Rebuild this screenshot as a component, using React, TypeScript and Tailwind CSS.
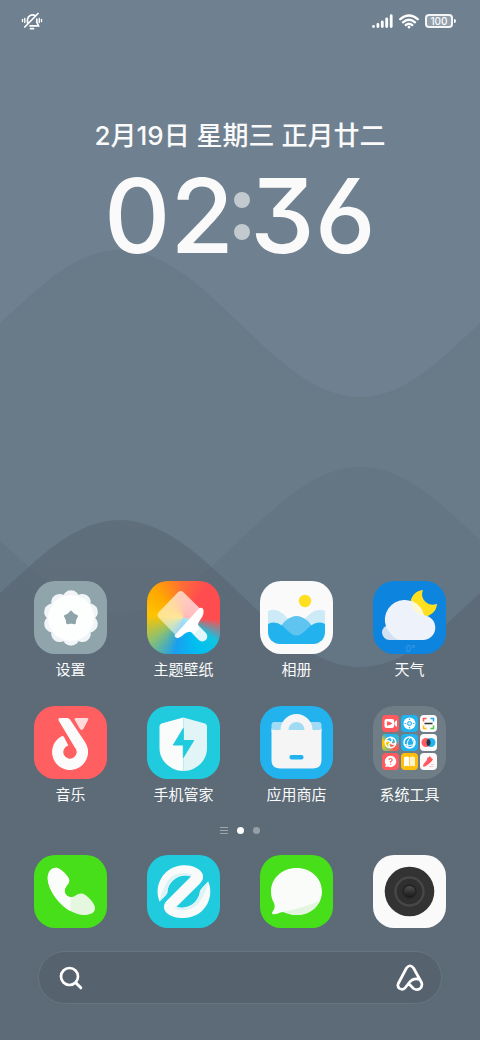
import type { ReactNode } from "react";

type AppItem = { id: string; label: string; tile: string; art: ReactNode };

// ─── Icon artwork (all on a 73×73 grid) ──────────────────────────────────────

function Art({ children }: { children: ReactNode }) {
  return (
    <svg viewBox="0 0 73 73" className="size-full" aria-hidden>
      {children}
    </svg>
  );
}

const PETALS = [0, 36, 72, 108, 144, 180, 216, 252, 288, 324];

const settingsArt = (
  <Art>
    <g fill="#f1f5f7">
      {PETALS.map((a) => (
        <circle key={a} cx="37" cy="17.6" r="8.4" transform={`rotate(${a} 37 37)`} />
      ))}
    </g>
    <circle cx="37" cy="37" r="23" fill="#fdfefe" />
    <path
      d="M37 31 L39.4 33.7 L42.7 35.2 L41 38.3 L40.5 42 L37 41.3 L33.5 42 L33 38.3 L31.3 35.2 L34.6 33.7Z"
      fill="#8fa4ab"
      stroke="#8fa4ab"
      strokeWidth="2.6"
      strokeLinejoin="round"
    />
  </Art>
);

const themeArt = (
  <Art>
    <defs>
      <linearGradient id="bristle" x1="0" y1="1" x2="1" y2="0">
        <stop offset="0" stopColor="#fff" stopOpacity="0.5" />
        <stop offset="1" stopColor="#fff" stopOpacity="0.72" />
      </linearGradient>
    </defs>
    <path d="M31 11.2 Q33.7 8.8 36.4 11.2 L53.5 28 L29 54.5 L11.5 36.5 Q9.5 34 11.7 31.3Z" fill="url(#bristle)" />
    <path d="M46 46 L55.3 55.5" stroke="#e3f6fa" strokeWidth="10" strokeLinecap="round" />
    <path
      d="M51.5 28 C54 25.5 57.2 27 56.5 31.5 C56 37 51.5 39.500 51 43.5 Q51 46 52.5 47.5 L47.5 52.5 C44 49.5 40 50.5 36.5 53.5 C33 57 28.5 58.5 27.5 54.5Z"
      fill="#fff"
    />
  </Art>
);

const galleryArt = (
  <Art>
    <defs>
      <clipPath id="frame">
        <path d="M8 20 H65 V51 A12 12 0 0 1 53 63 H20 A12 12 0 0 1 8 51Z" />
      </clipPath>
    </defs>
    <circle cx="45" cy="20" r="6.2" fill="#ffdf1f" />
    <g clipPath="url(#frame)">
      <path d="M8 30 Q15 26.5 22 32 C28 37 31 42 36.5 42 C42 42 45 37 51 32 Q58 26.5 65 30 V60 H8Z" fill="#cdebf6" />
      <path d="M8 60 C20 50 20 44 26 39.5 C33 33.5 40 33.5 47 39.5 C53 44 53 50 65 60Z" fill="#5fc4f0" />
      <path d="M8 43 Q15 39.5 22 44.5 C28 49 31 54.5 36.5 54.5 C42 54.5 45 49 51 44.5 Q58 39.5 65 43 V64 H8Z" fill="#22b2ee" />
    </g>
  </Art>
);

const weatherArt = (
  <Art>
    <path d="M50 9 A13.2 13.2 0 1 0 64 22.7 A10.5 10.5 0 0 1 50 9Z" fill="#ffe01e" />
    <circle cx="16.5" cy="51.5" r="7.5" fill="#cfe1f3" />
    <path d="M16 59 L26 45 L40 59Z" fill="#cfe1f3" />
    <path d="M18 53 A19.8 19.8 0 1 1 51 34.3 A12.4 12.4 0 0 1 51 59 H28 Q21.5 58.5 18 53Z" fill="#eef3fb" />
    <path d="M38.5 20 A19.8 19.8 0 0 1 51 34.3 A13.2 13.2 0 0 1 38.5 20Z" fill="#fdf8d0" />
    <text x="37.5" y="71" textAnchor="middle" fontSize="9" fill="#3f9be6" fontFamily="Inter, sans-serif">
      0°
    </text>
  </Art>
);

const musicArt = (
  <Art>
    <path
      d="M26.5 12 H33 Q35 12 36 13.5 L51 36 A18 18 0 1 1 27.5 30.2 Q29 29.5 30 31 L34.3 39.5 A6.7 6.7 0 1 0 40.5 41 L24.8 14.8 Q23.5 12 26.5 12Z"
      fill="#fbfbfb"
    />
    <path d="M42 12 H53 Q55 12 54 14 L49.5 22.8 Q47.5 25 45.8 22.8 L40.8 14 Q40 12 42 12Z" fill="#ffdadb" />
  </Art>
);

const shieldArt = (
  <Art>
    <path d="M36.3 11.5 L14.5 17.5 Q12.5 18.3 12.5 20.5 V42 C12.5 56 25 65 36.3 65Z" fill="#fafbfb" />
    <path d="M36.3 11.5 L58 17.5 Q60 18.3 60 20.5 V42 C60 56 48 65 36.3 65Z" fill="#e1f4f6" />
    <path d="M36.3 22.5 L26.3 39 H36.3 V51.5 L46.7 34.5 H36.3Z" fill="#21cbde" stroke="#21cbde" strokeLinejoin="round" />
  </Art>
);

const storeArt = (
  <Art>
    <path d="M11.5 26 V19 Q11.5 16 14.5 16 H58.5 Q61.5 16 61.5 19 V26Z" fill="#a0daf5" />
    <path
      d="M11.5 22 Q11.5 24 14 24 H20.5 A16 16 0 0 1 52.5 24 H59 Q61.5 24 61.5 22 V54 Q61.5 62.5 53 62.5 H20 Q11.5 62.5 11.5 54Z"
      fill="#f5f5f6"
    />
    <path d="M28.5 24 A8 8 0 0 1 44.5 24Z" fill="#a0daf5" />
    <rect x="29.5" y="49" width="14" height="4.5" rx="2" fill="#22b2ee" />
  </Art>
);

const phoneArt = (
  <Art>
    <path
      d="M22 12.7 C26 12.7 33 19.5 35 24 C36.5 29 30.5 31 30.7 36 C31 40 34 42.5 38 42 C42 41.5 43 38 48 38.5 C52 39 61 48 61 53 C61 58 56 60 50 60 C33 60 13.7 38 13.7 23 C13.7 17 17 12.7 22 12.7Z"
      fill="#e5f8df"
    />
    <path
      d="M22 12.7 C26 12.7 33 19.5 35 24 C36.5 29 30.5 31 30.7 36 C31 39.5 33.5 41.8 36.5 42 V56.2 C24 49 13.7 34 13.7 23 C13.7 17 17 12.7 22 12.7Z"
      fill="#fbfdfb"
    />
  </Art>
);

const browserArt = (
  <Art>
    <path
      d="M12.5 46.5 A26.3 26.3 0 0 1 36.3 10.3 C42 10 48 11.5 52 14.5 C57 18.5 57.5 23.5 53 28.5 L29.5 51.8 C35 54 43 52 48 47 C51 43.5 52.5 40 53 36 C54.5 33 58 30 61.2 26.5 A26.3 26.3 0 0 1 36.3 63 C30 63.3 25 62 21 59 C16 55 15.5 50 20 45.5 L44 21.5 C39 19.5 31 20.5 25.5 26 C22 29.5 20.5 33 20.3 38 C18.5 41 15.5 43.5 12.5 46.5Z"
      fill="#f9fbfb"
    />
    <path d="M20.3 38 C20.5 26 31 16.5 44 21.5 L46 20 C36 16 24 18 19 29 Q14 37 12.5 46.5 C15.5 43.5 18.5 41 20.3 38Z" fill="#def3f6" />
    <path d="M53 36 C52.5 48 41 56 29.5 51.8 L27.5 53.5 C37 58 50 54 55 43 Q60 36 61.2 26.5 C58 30 54.5 33 53 36Z" fill="#def3f6" />
  </Art>
);

const messageArt = (
  <Art>
    <defs>
      <clipPath id="bubble">
        <path d="M36.7 13 C51 13 62 23.5 62 36.5 C62 49.5 51 60 36.7 60 C31 60 27 58.5 23.5 57 C20 57 17 59.5 13.5 59.3 C11.5 59 12 57.5 13 56 C15 53 15 51 14 48 C12 45 11 41 11 36.5 C11 23.5 22 13 36.7 13Z" />
      </clipPath>
    </defs>
    <g clipPath="url(#bubble)">
      <rect width="73" height="73" fill="#fafcfa" />
      <path d="M22 57 Q44 53 62 45 V64 H20Z" fill="#e3f5de" />
    </g>
  </Art>
);

const cameraArt = (
  <Art>
    <defs>
      <linearGradient id="lens" x1="0" y1="0" x2="0" y2="1">
        <stop offset="0" stopColor="#505050" />
        <stop offset="1" stopColor="#191919" />
      </linearGradient>
    </defs>
    <circle cx="36.5" cy="36.5" r="24.8" fill="#333" />
    <circle cx="36.5" cy="36.5" r="14" fill="#2f2f2f" stroke="#474747" strokeWidth="2.4" />
    <circle cx="36.5" cy="36.5" r="7.2" fill="#232323" />
    <circle cx="36.5" cy="36.5" r="5.5" fill="url(#lens)" />
  </Art>
);

// ─── Folder contents (17×17 grid each) ───────────────────────────────────────

const FOLDER: { id: string; tile: string; art: ReactNode }[] = [
  {
    id: "recorder",
    tile: "bg-[#ff5a5f]",
    art: (
      <>
        <rect x="2.5" y="4" width="9.5" height="9" rx="2" fill="#fff" />
        <path d="M12.5 7 L15 5 V12 L12.5 10Z" fill="#fff" />
        <path d="M5 6.2 Q9 7 10.5 8.5 Q9 10 5 10.8Z" fill="#ff5a5f" />
      </>
    ),
  },
  {
    id: "remote",
    tile: "bg-[#22b2ee]",
    art: (
      <>
        <circle cx="8.5" cy="8.5" r="6" fill="#fff" />
        <circle cx="8.5" cy="8.5" r="2" fill="#bfe8fa" stroke="#22b2ee" />
        <path d="M8.5 3.5v1.5M8.5 12v1.5M3.5 8.5h1.5M12 8.5h1.5" stroke="#22b2ee" strokeWidth="1.2" />
      </>
    ),
  },
  {
    id: "scanner",
    tile: "bg-[#fafafa]",
    art: (
      <g fill="none" strokeWidth="1.5">
        <path d="M3.5 6.5 V3.5 H6.5" stroke="#ff5a5f" />
        <path d="M10.5 3.5 H13.5 V6.5" stroke="#22a7ee" />
        <path d="M13.5 10.5 V13.5 H10.5" stroke="#4cc94a" />
        <path d="M6.5 13.5 H3.5 V10.5" stroke="#ffbf10" />
        <path d="M4.5 8.5 H12.5" stroke="#333" />
      </g>
    ),
  },
  {
    id: "assistant",
    tile: "bg-[conic-gradient(from_0deg,#22b2ee,#38b8d0_20%,#ff5a4f_35%,#ff5a4f_42%,#8cc070_58%,#ffc400_70%,#ffc400_78%,#22b2ee_92%)]",
    art: (
      <g fill="none" stroke="#fff" strokeWidth="1.4">
        <circle cx="8.5" cy="8.5" r="5.3" />
        <path d="M8.5 3.2 Q12 6 8.5 8.5 Q5 11 8.5 13.8M3.2 8.5 Q6 5 8.5 8.5 Q11 12 13.8 8.5" />
      </g>
    ),
  },
  {
    id: "browser",
    tile: "bg-[#22b2ee]",
    art: (
      <g fill="none" stroke="#fff">
        <circle cx="8.5" cy="8.5" r="5.5" strokeWidth="1.5" />
        <path d="M10 3 Q4 8 7.5 14M10 3 Q14 9 12 12.5M3.5 10.5 Q9 12.5 13.5 10.5" />
      </g>
    ),
  },
  {
    id: "twin",
    tile: "bg-[#fafafa]",
    art: (
      <>
        <circle cx="6" cy="8.5" r="4.5" fill="#ff5a5f" />
        <circle cx="11" cy="8.5" r="4.5" fill="#22b2ee" />
        <path d="M8.5 4.7 A4.5 4.5 0 0 1 8.5 12.3 A4.5 4.5 0 0 1 8.5 4.7Z" fill="#27333f" />
      </>
    ),
  },
  {
    id: "feedback",
    tile: "bg-[#ff5a5f]",
    art: (
      <>
        <path d="M8.5 2.7 A5.7 5.7 0 1 1 6 13.5 L3.3 14 L3.8 11.5 A5.7 5.7 0 0 1 8.5 2.7Z" fill="#fff" />
        <path
          d="M7 7 Q7 5.5 8.5 5.5 Q10.2 5.5 10.2 7 Q10 8.2 8.6 8.6 V9.5M8.6 10.7 V11.7"
          fill="none"
          stroke="#ff5a5f"
          strokeWidth="1.2"
        />
      </>
    ),
  },
  {
    id: "reader",
    tile: "bg-[#ffbe0c]",
    art: (
      <>
        <path d="M3 4.5 Q6 2.5 8.2 4.5 V13.5 Q6 12.2 3 13.5Z" fill="#fff" />
        <path d="M14 4.5 Q11 2.5 8.8 4.5 V13.5 Q11 12.2 14 13.5Z" fill="#fff3c9" />
      </>
    ),
  },
  {
    id: "health",
    tile: "bg-[#fafafa]",
    art: (
      <>
        <path
          d="M9.5 3 L13 6.5 Q11.5 9 8 11.5 Q5 14 3.3 13.7 Q2.5 12 4.5 10 Q7.5 7.5 7.5 4.5 Q9 5 9.5 3Z"
          fill="#ff5a5f"
        />
        <path d="M9 13.5 H13.5M11 11.5 H13.5" stroke="#ffc3c5" />
      </>
    ),
  },
];

const folderArt = (
  <span className="grid size-full grid-cols-[17px_17px_17px] content-center justify-center gap-[2px]">
    {FOLDER.map((f) => (
      <span key={f.id} className={`size-[17px] overflow-hidden rounded-[4px] ${f.tile}`}>
        <svg viewBox="0 0 17 17" className="size-full" aria-hidden>
          {f.art}
        </svg>
      </span>
    ))}
  </span>
);

const ROWS: AppItem[][] = [
  [
    { id: "settings", label: "设置", tile: "bg-[#8fa4ab]", art: settingsArt },
    {
      id: "themes",
      label: "主题壁纸",
      tile: "bg-[conic-gradient(from_0deg,#ff6a38,#ff4d4f_10%,#ff4d4f_26%,#10c4e2_35%,#00bff0_43%,#1a9ff0_54%,#8cc070_65%,#ffc400_76%,#ffa800_87%,#ff6a38)]",
      art: themeArt,
    },
    { id: "gallery", label: "相册", tile: "bg-[#fafafa]", art: galleryArt },
    { id: "weather", label: "天气", tile: "bg-[#0d84de]", art: weatherArt },
  ],
  [
    { id: "music", label: "音乐", tile: "bg-[#ff5f61]", art: musicArt },
    { id: "security", label: "手机管家", tile: "bg-[#21cbde]", art: shieldArt },
    { id: "store", label: "应用商店", tile: "bg-[#22b2ee]", art: storeArt },
    { id: "tools", label: "系统工具", tile: "bg-white/12", art: folderArt },
  ],
];

const DOCK: AppItem[] = [
  { id: "phone", label: "电话", tile: "bg-[#46df19]", art: phoneArt },
  { id: "web", label: "浏览器", tile: "bg-[#21cbde]", art: browserArt },
  { id: "messages", label: "信息", tile: "bg-[#46df19]", art: messageArt },
  { id: "camera", label: "相机", tile: "bg-[#fafafa]", art: cameraArt },
];

export default function App() {
  return (
    <div className="relative isolate flex min-h-screen flex-col bg-[#6f8090] font-['Inter','Noto_Sans_CJK_SC',sans-serif] text-[#fafafa]">
      <Wallpaper />
      <StatusBar />
      <Clock />

      <main className="mt-auto flex flex-col gap-6 px-[34px]">
        {ROWS.map((row, i) => (
          <div key={i} className="flex justify-between">
            {row.map((app) => (
              <AppButton key={app.id} app={app} />
            ))}
          </div>
        ))}
      </main>

      <PageDots />

      <nav className="mt-[21px] flex justify-between px-[34px]">
        {DOCK.map((app) => (
          <AppButton key={app.id} app={app} hideLabel />
        ))}
      </nav>

      <SearchBar />
    </div>
  );
}

// ─── Pieces ──────────────────────────────────────────────────────────────────

function Wallpaper() {
  return (
    <svg
      viewBox="0 0 480 1040"
      preserveAspectRatio="none"
      className="absolute inset-0 -z-10 size-full"
      aria-hidden
    >
      <defs>
        <linearGradient id="front" gradientUnits="userSpaceOnUse" x1="0" y1="520" x2="0" y2="700">
          <stop offset="0" stopColor="#55626d" stopOpacity="0.5" />
          <stop offset="1" stopColor="#596671" stopOpacity="0.7" />
        </linearGradient>
      </defs>
      <path d="M0 323 C40 287 75 250 120 250 C207 250 273 397 360 397 C405 397 440 360 480 323 V1040 H0Z" fill="#697b88" />
      <path d="M0 541 C40 576 75 613 120 613 C207 613 273 467 360 467 C405 467 440 503 480 540 V1040 H0Z" fill="#647684" />
      <path d="M0 593 C40 557 75 520 120 520 C207 520 273 667 360 667 C405 667 440 630 480 593 V1040 H0Z" fill="url(#front)" />
    </svg>
  );
}

function StatusBar() {
  return (
    <header className="flex h-[42px] items-center justify-between pr-6 pl-[21px]">
      <svg viewBox="0 0 22 20" className="h-5 w-[22px]" fill="none" stroke="#fff" strokeWidth="1.7" strokeLinecap="round" aria-label="静音">
        <path d="M6.5 12 V8.5 A5 5 0 0 1 14 4.5M15.8 8 V11 L17.5 14.8 H9M9.5 17.7 H12.5" />
        <path d="M3.8 16 L17 2.5" />
        <path d="M3.8 7.5 V11.5M1.5 8.5 V10.5M18.3 7.5 V11.5M20.5 8.5 V10.5" strokeWidth="1.4" />
      </svg>
      <div className="flex items-center gap-1.5">
        <svg viewBox="0 0 21 14" className="h-3.5 w-[21px]" stroke="#fff" strokeWidth="2.8" strokeLinecap="round" aria-label="信号">
          <path d="M1.5 12.5 V12.6M5.9 12.5 V10.5M10.3 12.5 V8M14.7 12.5 V4.8M19.2 12.5 V1.7" />
        </svg>
        <svg viewBox="0 0 20 15" className="h-[15px] w-5" fill="none" stroke="#fff" strokeWidth="2.4" strokeLinecap="round" aria-label="无线网络">
          <path d="M1.3 5.2 Q10 -2.2 18.7 5.2M4 8.3 Q10 3.2 16 8.3M6.8 11 Q10 8.4 13.2 11" />
          <circle cx="10" cy="13.2" r="0.7" fill="#fff" strokeWidth="1.4" />
        </svg>
        <div className="flex items-center gap-px">
          <div className="flex h-3.5 w-7 items-center justify-center rounded-[4px] border-2 border-white/90 bg-white/25 text-[10px] leading-none font-medium">
            100
          </div>
          <div className="h-1 w-0.5 rounded-r-sm bg-white" />
        </div>
      </div>
    </header>
  );
}

function Clock() {
  return (
    <section className="mt-[76px] flex flex-col items-center">
      <p className="text-[26px] leading-9 font-medium whitespace-pre">2月19日 星期三 正月廿二</p>
      <time
        dateTime="02:36"
        className="mt-1.5 flex items-center text-[103px] leading-[112px] font-medium [font-feature-settings:'cv09','ss01']"
      >
        <span>02</span>
        <span className="flex flex-col gap-4" aria-hidden>
          <span className="size-4 rounded-full bg-[#c2c9cf]" />
          <span className="size-4 rounded-full bg-[#c2c9cf]" />
        </span>
        <span>36</span>
      </time>
    </section>
  );
}

function AppButton({ app, hideLabel = false }: { app: AppItem; hideLabel?: boolean }) {
  return (
    <button type="button" aria-label={app.label} className="flex w-[73px] flex-col items-center">
      <span className={`block size-[73px] overflow-hidden rounded-[21px] ${app.tile}`}>{app.art}</span>
      {!hideLabel && <span className="mt-1 text-[15px] leading-6 whitespace-nowrap">{app.label}</span>}
    </button>
  );
}

function PageDots() {
  return (
    <div className="mt-[19px] flex h-2 items-center justify-center gap-[9px]">
      <span className="flex w-2 flex-col gap-0.5">
        <span className="h-px bg-white/40" />
        <span className="h-px bg-white/40" />
        <span className="h-px bg-white/40" />
      </span>
      <span className="size-[7px] rounded-full bg-white" />
      <span className="size-[7px] rounded-full bg-white/35" />
    </div>
  );
}

function SearchBar() {
  return (
    <form
      role="search"
      className="mx-[38px] mt-[23px] mb-9 flex h-[53px] items-center rounded-full border border-[#677581] bg-[#56626e] pr-[17px] pl-5"
    >
      <label htmlFor="search" aria-label="搜索">
        <svg viewBox="0 0 24 24" className="size-6" fill="none" stroke="#fff" strokeLinecap="round">
          <circle cx="10.5" cy="10.5" r="8.5" strokeWidth="2.7" />
          <path d="M17 17 L21.8 21.8" strokeWidth="3" />
        </svg>
      </label>
      <input id="search" type="search" className="h-full min-w-0 flex-1 bg-transparent px-3 text-base outline-none" />
      <button type="button" aria-label="语音助手">
        <svg viewBox="0 0 28 28" className="size-7" fill="none" stroke="#fff" strokeWidth="2.7" strokeLinecap="round" strokeLinejoin="round">
          <path d="M12.5 19.5 L9 24 Q6.5 26.5 3.5 24.5 Q1 22.5 2.3 19.5 L10.5 4 Q14 -0.5 17.5 4 L25.5 18.5 Q27 22.5 23.5 25 Q20.5 26.5 17.5 24.5 L12.5 19.5 Q17 13 24 15.5" />
        </svg>
      </button>
    </form>
  );
}
